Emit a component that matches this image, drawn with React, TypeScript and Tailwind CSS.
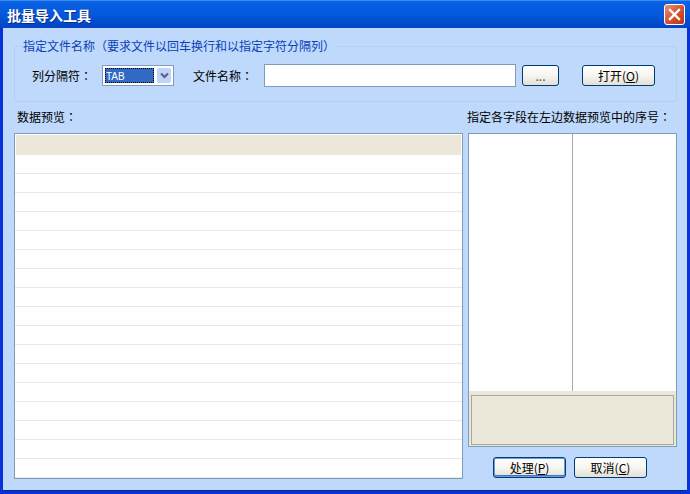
const previewRows = Array.from({ length: 17 });

function XpButton({ label, hotkey, width, focused }: { label: string; hotkey?: string; width: string; focused?: boolean }) {
  return (
    <button
      className={`${width} h-[21px] shrink-0 rounded-[3px] border border-[#003c74] bg-gradient-to-b from-white via-[#f6f5f0] to-[#e4e0d4] text-[12px] leading-[18px] ${hotkey ? "text-black" : "text-[#555]"} ${focused ? "shadow-[inset_0_0_0_1px_#6f9ade,inset_0_-1px_0_1px_#3d74c9]" : ""}`}
    >
      {label}
      {hotkey && (
        <>
          (<span className="underline">{hotkey}</span>)
        </>
      )}
    </button>
  );
}

function Colon() {
  return <span className="font-['Noto_Sans_CJK_TC',sans-serif]">：</span>;
}

function CloseIcon() {
  return (
    <div className="flex h-[21px] w-[21px] items-center justify-center rounded-[3px] border border-white bg-gradient-to-br from-[#e8917a] via-[#d8532f] to-[#b8341a]">
      <svg width="13" height="13" viewBox="0 0 13 13">
        <path d="M2 2 L11 11 M11 2 L2 11" stroke="white" strokeWidth="2.4" strokeLinecap="square" />
      </svg>
    </div>
  );
}

export default function App() {
  return (
    <div className="flex h-[494px] w-[690px] flex-col overflow-hidden bg-[#0831d9] font-['Noto_Sans_CJK_SC','Liberation_Sans',sans-serif] text-[12px] text-black">
      {/* Title bar */}
      <div className="flex h-[28px] shrink-0 items-center justify-between border-t border-[#3a8cf5] bg-gradient-to-b from-[#0a62e4] via-[#0458dc] to-[#0344c4] pl-[7px] pr-[5px]">
        <span className="text-[14px] leading-none font-bold text-white [text-shadow:1px_1px_0_#0a2a80]">批量导入工具</span>
        <CloseIcon />
      </div>

      {/* Client area */}
      <div className="mx-[3px] mb-[3px] flex min-h-0 flex-1 flex-col border-b border-[#002a8c] bg-[#bed9fb] pl-[11px] pr-[10px]">
        {/* File group */}
        <fieldset className="mt-[10px] h-[64px] shrink-0 rounded-[3px] border border-[#b3cff2] px-[16px]">
          <legend className="ml-[-9px] h-[16px] pl-[1px] text-[12px] leading-[16px] text-[#0b3fb5]">
            指定文件名称（要求文件以回车换行和以指定字符分隔列）
          </legend>
          <div className="mt-[5px] flex items-center pt-[5px]">
            <span className="w-[71px] shrink-0 pl-[1px]">
              列分隔符
              <Colon />
            </span>
            <div className="flex h-[21px] w-[72px] shrink-0 items-center border border-[#7f9db9] bg-white p-[2px]">
              <div className="flex h-full w-[49px] items-center border border-dotted border-black bg-[#316ac5] pt-[2px] font-['Liberation_Sans',sans-serif] text-[10px] leading-none text-white">
                TAB
              </div>
              <div className="ml-[3px] flex h-full flex-1 items-center justify-center rounded-[2px] bg-[#c1d3fb]">
                <svg width="9" height="7" viewBox="0 0 9 7">
                  <path d="M1 1.5 L4.5 5 L8 1.5" fill="none" stroke="#4d6185" strokeWidth="2" />
                </svg>
              </div>
            </div>
            <span className="ml-[19px] w-[71px] shrink-0">
              文件名称
              <Colon />
            </span>
            <div className="h-[23px] w-[252px] shrink-0 border border-[#7f9db9] bg-white" />
            <div className="ml-[6px]">
              <XpButton label="..." width="w-[37px]" />
            </div>
            <div className="ml-[23px]">
              <XpButton label="打开" hotkey="O" width="w-[73px]" />
            </div>
          </div>
        </fieldset>

        {/* Headings */}
        <div className="mt-[6px] flex h-[18px] shrink-0 items-center justify-between pl-[3px] pr-[6px] leading-[18px]">
          <span>
            数据预览
            <Colon />
          </span>
          <span>
            指定各字段在左边数据预览中的序号
            <Colon />
          </span>
        </div>

        {/* Panels */}
        <div className="mt-[7px] flex min-h-0 flex-1 gap-[5px]">
          <div className="h-[346px] w-[449px] shrink-0 overflow-hidden border border-[#7f9db9] bg-white">
            <div className="mt-[1px] mr-[1px] ml-[1px] h-[20px] bg-[#ebe8d9]" />
            <div className="h-[18px]" />
            {previewRows.map((_, i) => (
              <div key={i} className="h-[19px] border-t border-[#ebe9dd]" />
            ))}
          </div>

          <div className="flex w-[209px] shrink-0 flex-col">
            <div className="flex h-[314px] flex-col border border-[#7f9db9] bg-white">
              <div className="flex h-[257px] shrink-0">
                <div className="w-[104px] shrink-0 border-r border-[#a9a9a2]" />
              </div>
              <div className="flex flex-1 bg-[#ebe8d9] px-[2px] pt-[4px] pb-[1px]">
                <div className="flex-1 border border-[#a8a89c] bg-[#ebe8d9]" />
              </div>
            </div>
            <div className="mt-[10px] flex gap-[8px] pl-[25px]">
              <XpButton label="处理" hotkey="P" width="w-[73px]" focused />
              <XpButton label="取消" hotkey="C" width="w-[73px]" />
            </div>
          </div>
        </div>
      </div>
    </div>
  );
}
